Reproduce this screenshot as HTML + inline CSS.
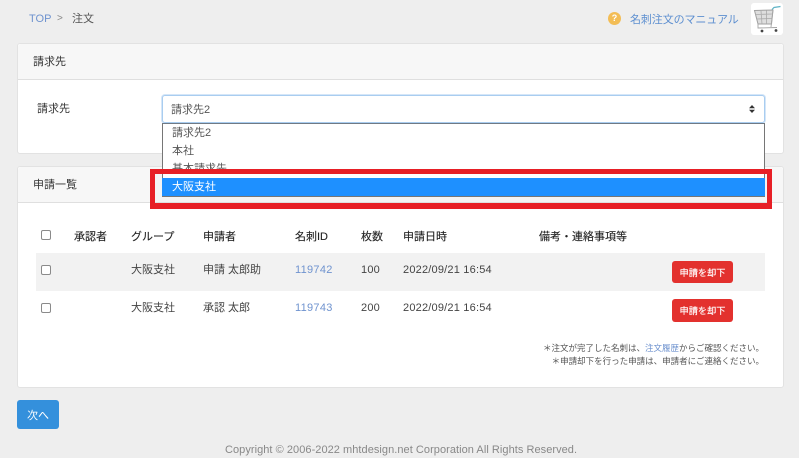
<!DOCTYPE html>
<html lang="ja"><head><meta charset="utf-8"><title>注文</title>
<style>
html,body{margin:0;padding:0}
body{width:799px;height:457px;overflow:hidden;background:#eee;position:relative;font-family:"Liberation Sans","Noto Sans CJK JP",sans-serif;font-size:11px;color:#444}
.a{position:absolute;white-space:nowrap;line-height:16px;transform:translateY(1px)}
.box{position:absolute;box-sizing:border-box}
.card{background:#fff;border:1px solid #e2e2e2;border-radius:3px;left:17px;width:767px}
.head{background:#f7f7f7;border-bottom:1px solid #dfdfdf;left:18px;width:765px;border-radius:3px 3px 0 0}
.l{color:#6f93cf;letter-spacing:.3px}
.th{color:#222;font-weight:400;-webkit-text-stroke:.12px #222}
.td{color:#444}
.dt{letter-spacing:.2px}
.cb{width:10px;height:10px;border:1px solid #8a8a8a;border-radius:2px;background:#fff;left:41px}
.btn{left:672px;width:61px;background:#e3312e;border-radius:3px;color:#fff;font-size:9.2px;text-align:center;-webkit-text-stroke:.15px #fff}
</style></head><body>
<div class="a l" style="left:29px;top:10px;font-size:11px;letter-spacing:0">TOP</div>
<div class="a" style="left:57px;top:10px;color:#888;font-size:10px">&gt;</div>
<div class="a" style="left:72px;top:10px;color:#555">注文</div>

<div class="box" style="left:608px;top:12px;width:13px;height:13px;border-radius:50%;background:#f3bd55;color:#fff;font-size:9px;font-weight:700;text-align:center;line-height:13px">?</div>
<div class="a" style="left:630px;top:11px;color:#5d8fd0;font-size:11px;letter-spacing:-.1px">名刺注文のマニュアル</div>
<div class="box" style="left:751px;top:3px;width:32px;height:32px;background:#fff;border-radius:3px">
<svg width="32" height="32" viewBox="0 0 32 32" fill="none"><path d="M3.500 7.500L22 7L20.500 21H7Z" fill="#dedede" stroke="#a0a0a0" stroke-width="1"/><path d="M4.500 11.500L21.500 11M5.500 16L21 15.500M10 8L11 21M15.500 7.500V21" stroke="#aaa" stroke-width=".8"/><path d="M21 6.500L23 4.500L29.500 3.500" stroke="#5fb4c6" stroke-width="1.200"/><path d="M7 21L7 25L26 24.500M22 7L20 24" stroke="#a5a5a5" stroke-width=".9"/><circle cx="11" cy="28" r="1.400" fill="#444"/><circle cx="25" cy="27.500" r="1.400" fill="#444"/></svg></div>

<div class="box card" style="top:43px;height:111px"></div>
<div class="box head" style="top:44px;height:36px"></div>
<div class="a" style="left:33px;top:53px;color:#333">請求先</div>
<div class="a" style="left:37px;top:100px;color:#333">請求先</div>
<div class="box" style="left:162px;top:95px;width:603px;height:28px;background:#fff;border:1px solid #a9cdf0;border-radius:3px;box-shadow:0 0 0 1px #d5e6f8"></div>
<div class="a" style="left:171px;top:101px;color:#555">請求先2</div>
<svg class="box" style="left:749px;top:105px" width="6" height="8" viewBox="0 0 6 8"><path d="M3 0L6 3.300H0ZM3 8L0 4.700H6Z" fill="#333"/></svg>

<div class="box card" style="top:166px;height:222px"></div>
<div class="box head" style="top:167px;height:36px"></div>
<div class="a" style="left:33px;top:176px;color:#333">申請一覧</div>

<div class="box" style="left:162px;top:123px;width:603px;height:74px;background:#fff;border:1px solid #767676;border-top-color:#6f7a85"></div>
<div class="a" style="left:172px;top:124px;color:#555">請求先2</div>
<div class="a" style="left:172px;top:142px;color:#555">本社</div>
<div class="a" style="left:172px;top:160px;color:#555">基本請求先</div>
<div class="box" style="left:155px;top:174px;width:612px;height:29px;background:#f4f4f4"></div>
<div class="box" style="left:162px;top:174px;width:603px;height:4px;background:#fff;border:solid #767676;border-width:0 1px"></div>
<div class="box" style="left:162px;top:178px;width:603px;height:19px;background:#1e90ff;border-bottom:1px solid #767676"></div>
<div class="a" style="left:172px;top:178px;color:#fff">大阪支社</div>
<div class="box" style="left:155px;top:202px;width:612px;height:1px;background:#dfdfdf"></div>
<div class="box" style="left:150px;top:169px;width:622px;height:40px;border:solid #e71f26;border-width:5px 5px 6px 5px"></div>

<div class="box cb" style="top:230px"></div>
<div class="a th" style="left:74px;top:228px">承認者</div>
<div class="a th" style="left:131px;top:228px">グループ</div>
<div class="a th" style="left:203px;top:228px">申請者</div>
<div class="a th" style="left:295px;top:228px">名刺ID</div>
<div class="a th" style="left:361px;top:228px">枚数</div>
<div class="a th" style="left:403px;top:228px">申請日時</div>
<div class="a th" style="left:539px;top:228px">備考・連絡事項等</div>

<div class="box" style="left:36px;top:253px;width:729px;height:38px;background:#f2f2f2"></div>
<div class="box cb" style="top:265px"></div>
<div class="a td" style="left:131px;top:261px">大阪支社</div>
<div class="a td" style="left:203px;top:261px">申請 太郎助</div>
<div class="a l" style="left:295px;top:261px">119742</div>
<div class="a td dt" style="left:361px;top:261px">100</div>
<div class="a td dt" style="left:403px;top:261px">2022/09/21 16:54</div>
<div class="box btn" style="top:261px;height:22px;line-height:24px">申請を却下</div>

<div class="box cb" style="top:303px"></div>
<div class="a td" style="left:131px;top:299px">大阪支社</div>
<div class="a td" style="left:203px;top:299px">承認 太郎</div>
<div class="a l" style="left:295px;top:299px">119743</div>
<div class="a td dt" style="left:361px;top:299px">200</div>
<div class="a td dt" style="left:403px;top:299px">2022/09/21 16:54</div>
<div class="box btn" style="top:299px;height:23px;line-height:24px">申請を却下</div>

<div class="a" style="right:35px;top:341px;font-size:8.5px;line-height:13px;color:#555">＊注文が完了した名刺は、<span class="l" style="letter-spacing:0">注文履歴</span>からご確認ください。</div>
<div class="a" style="right:35px;top:354px;font-size:8.5px;line-height:13px;color:#555">＊申請却下を行った申請は、申請者にご連絡ください。</div>

<div class="box" style="left:17px;top:400px;width:42px;height:29px;background:#3490dc;border-radius:3px;color:#fff;text-align:center;line-height:32px">次へ</div>
<div class="a" style="left:225px;top:441px;width:352px;text-align:center;color:#888;font-size:11px;letter-spacing:.05px">Copyright © 2006-2022 mhtdesign.net Corporation All Rights Reserved.</div>
</body></html>
